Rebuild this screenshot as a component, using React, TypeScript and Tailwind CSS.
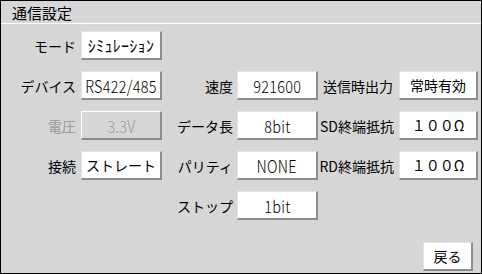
import React from "react";

const jp = { fontFamily: '"Noto Sans CJK JP", "Noto Sans", sans-serif' };

function Btn({ children, disabled, monoFont, size }: { children: React.ReactNode; disabled?: boolean; monoFont?: boolean; size?: string }) {
  return (
    <div
      style={jp}
      className={
        "h-[29px] flex items-center justify-center border-l border-t border-r-2 border-b-2 leading-none whitespace-nowrap " +
        (disabled
          ? "bg-[#d6d6d6] border-l-white border-t-white border-r-[#8c8c8c] border-b-[#8c8c8c] text-[#9a9a9a]"
          : "bg-white border-l-[#e4e4e4] border-t-[#e4e4e4] border-r-[#8c8c8c] border-b-[#8c8c8c] text-black")
      }
    >
      {monoFont ? (
        <span className="inline-block text-[17px] font-light scale-x-[0.85] tracking-[0.3px]">{children}</span>
      ) : (
        <span className={size ? size : "text-[14px]"}>{children}</span>
      )}
    </div>
  );
}

function Label({ children, pr, disabled }: { children?: React.ReactNode; pr: string; disabled?: boolean }) {
  return (
    <div style={jp} className={"h-[29px] flex items-center justify-end whitespace-nowrap text-[14px] leading-none " + pr + (disabled ? " text-[#9a9a9a]" : " text-black")}>
      {children}
    </div>
  );
}

export default function App() {
  return (
    <div className="w-[482px] h-[274px] bg-[#d6d6d6] border border-black flex flex-col">
      <div style={jp} className="h-[23px] border-b border-b-white flex items-center pl-[11px] text-[15px] leading-none text-black">
        通信設定
      </div>
      <div className="grid grid-cols-[80px_81px_75px_81px_81px_79px] gap-y-[11px] pt-[7px]">
        <Label pr="pr-[5px]">モード</Label>
        <Btn size="text-[16px] tracking-[0.3px]">ｼﾐｭﾚｰｼｮﾝ</Btn>
        <div />
        <div />
        <div />
        <div />

        <Label pr="pr-[5px]">デバイス</Label>
        <Btn monoFont>RS422/485</Btn>
        <Label pr="pr-[4px]">速度</Label>
        <Btn monoFont>921600</Btn>
        <Label pr="pr-[6px]">送信時出力</Label>
        <Btn>常時有効</Btn>

        <Label pr="pr-[5px]" disabled>電圧</Label>
        <Btn disabled monoFont>3.3V</Btn>
        <Label pr="pr-[4px]">データ長</Label>
        <Btn monoFont>8bit</Btn>
        <Label pr="pr-[5px]">SD終端抵抗</Label>
        <Btn>１００Ω</Btn>

        <Label pr="pr-[5px]">接続</Label>
        <Btn>ストレート</Btn>
        <Label pr="pr-[4px]">パリティ</Label>
        <Btn monoFont>NONE</Btn>
        <Label pr="pr-[5px]">RD終端抵抗</Label>
        <Btn>１００Ω</Btn>

        <div />
        <div />
        <Label pr="pr-[4px]">ストップ</Label>
        <Btn monoFont>1bit</Btn>
        <div />
        <div />
      </div>
      <div className="flex-1 flex items-end justify-end pr-[8px] pb-[2px]">
        <div className="w-[50px]">
          <Btn>戻る</Btn>
        </div>
      </div>
    </div>
  );
}
